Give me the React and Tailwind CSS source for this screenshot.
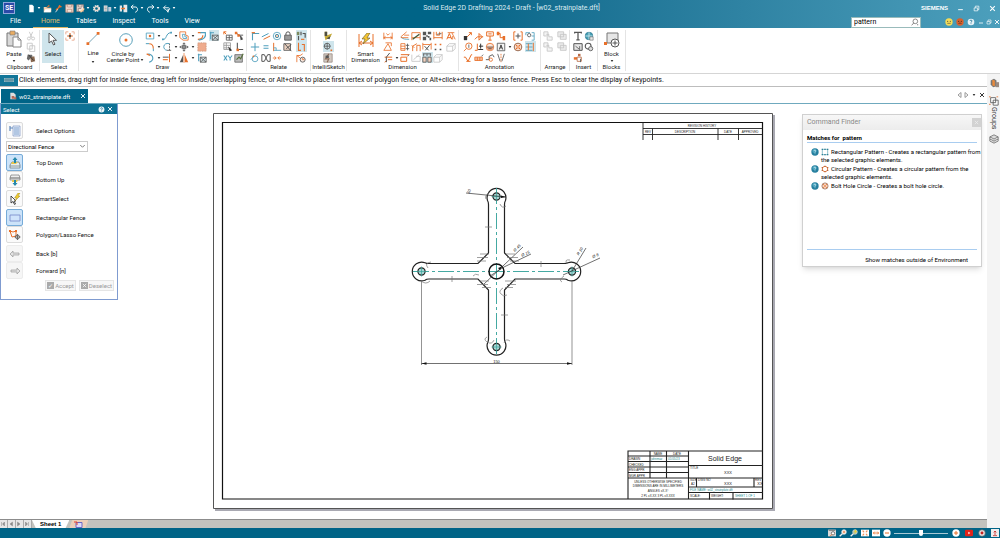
import { useState } from 'react';

// ===============================
// ICONS (12 x 12 grid)
// ===============================

const o = '#e8702a';
const g = '#555555';
const b = '#4f9fbd';
const l = '#c4c4c4';

const icons = {
  // quick access
  newDoc: <path d="M3 1h4l2 2v8H3z" fill="#fff" />,
  open: <><path d="M1 4h4l1 1h5v6H1z" fill="#f3cfae" /><path d="M4 5l4-4 1 2z" fill={o} /><path d="M3 7h8l-1 4H1z" fill="#fff" /></>,
  pin: <><path d="M7 1l4 3-4 1-3 4-2-2 3-2z" fill={o} /><path d="M2 11l3-4" stroke="#fff" /></>,
  save: <><path d="M1 1h10v10H1z" fill="#f7e6dc" /><path d="M3 1v3h6V1M3 11V7h6v4M1 1h10v10H1z" fill="none" stroke="#b98a78" /></>,
  saveAs: <><path d="M1 1h9v9H1z" fill="#f7e6dc" /><path d="M3 1v3h5V1M3 10V6h4M1 1h9v9H1z" fill="none" stroke="#8b7a78" /><path d="M6 11l5-5" stroke="#ffd19a" strokeWidth="2" /></>,
  gear: <><circle cx="6" cy="6" r="3.500" fill="none" stroke="#e8e8e8" strokeWidth="2.500" strokeDasharray="2 0.8" /><circle cx="6" cy="6" r="2.600" fill="none" stroke="#f0dcd0" strokeWidth="1.600" /></>,
  props: <><path d="M1 2h5v8H1z" fill="#e2e2e2" /><path d="M2 4h3M2 6h3M2 8h3" stroke="#777" strokeWidth=".7" /><path d="M7 4h4v6H7z" fill="#bcd" /></>,
  door: <><path d="M1 2h3v8H1zM6 1h5v10H6z" fill="#e8e8e8" /><path d="M3 6h5" stroke={o} strokeWidth="2" /></>,
  undo: <path d="M4.500 1L1.500 4l3 3M2 4h5c4 0 4 6 0 7" fill="none" stroke="#fff" strokeWidth="1.300" />,
  redo: <path d="M7.500 1l3 3-3 3M10 4H5c-4 0-4 6 0 7" fill="none" stroke="#fff" strokeWidth="1.300" />,
  orbit: <path d="M5 2L2 5l3 3M2 5h6c3 0 3 3 0 3H6m0 0l2 3 1-4" fill="none" stroke="#fff" strokeWidth="1.200" />,

  // clipboard
  cut: <><path d="M4 1l3 7M8 1L5 8" stroke={l} /><circle cx="3.500" cy="9" r="1.800" fill="none" stroke={l} /><circle cx="8.500" cy="9" r="1.800" fill="none" stroke={l} /></>,
  copy: <path d="M1.500 1.500h6v7h-6zM4.500 4.500h6v7h-6z" fill="#fff" stroke={l} />,
  brush: <><path d="M2 2h5l1 2-5 5-2-2z" fill="#6b6b6b" /><path d="M5 5l5-1 1 6-5 1z" fill="#8a6a52" /><path d="M3 2l6 7" stroke="#333" /></>,
  fence: <><path d="M1 4V1h3M8 1h3v3M11 8v3H8M4 11H1V8" fill="none" stroke="#e6a184" /><path d="M6 2.500v7M2.500 6h7" stroke={o} strokeWidth="1.400" /><circle cx="6" cy="6" r="1.500" fill={g} /></>,

  // draw
  rect: <><path d="M1.500 2.500h9v7h-9z" fill="none" stroke={b} /><circle cx="6" cy="6" r="1.500" fill={o} /></>,
  curve: <><path d="M1 10c5 1 3-8 10-8" fill="none" stroke={b} strokeWidth="1.200" /><path d="M0 9h2v2H0zM10 1h2v2h-2z" fill={b} /></>,
  offset: <><path d="M1 1h7v4l3 1v5H5L1 8z" fill="none" stroke={o} /><path d="M4 4h3v3h2v2H5z" fill="none" stroke={b} /></>,
  fillet: <><path d="M5 2c4 0 5 2 5 6" fill="none" stroke={o} strokeWidth="1.300" /><path d="M1 2h4M10 8v3" stroke={b} strokeWidth="1.200" /></>,
  arc: <><path d="M9 2C1 0 0 9 6 10" fill="none" stroke={b} strokeWidth="1.200" /><path d="M9 2v8" stroke={g} strokeDasharray="2 1" /><path d="M6 10h5" stroke={g} /></>,
  move: <path d="M6 1v10M1 6h10M4.500 2.500L6 1l1.500 1.500M4.500 9.500L6 11l1.500-1.500M2.500 4.500L1 6l1.500 1.500M9.500 4.500L11 6 9.500 7.500M4 4h4v4H4z" fill="none" stroke={g} />,
  hook: <><path d="M4 1c7 2 7 8 1 10" fill="none" stroke={b} strokeWidth="1.300" /><path d="M2 1l4 2" stroke={o} strokeWidth="1.500" /></>,
  trim: <><path d="M1 8h6" stroke={o} strokeWidth="1.300" /><path d="M9 1v10" stroke={o} strokeWidth="1.200" /><path d="M1 5h7" stroke={g} strokeWidth="1.200" /></>,
  mirror: <><path d="M5 2v9H1z" fill={g} /><path d="M7 2v9h4z" fill={o} /><path d="M6 0v12" stroke={o} strokeWidth=".8" /></>,
  path3: <><path d="M1 2h4M1 10c5 0 6-2 6-5" fill="none" stroke={o} strokeWidth="1.400" /><path d="M4 2h6c1 5-1 8-8 9" fill="none" stroke={b} strokeWidth="1.400" /></>,
  fill: <path d="M1 1h10v10H1z" fill="#efac8e" stroke="#c28b70" strokeDasharray="1 1" />,
  corner: <><path d="M1 2h5M2 1v9" stroke={b} strokeWidth="1.300" /><path d="M4 5h7v6H4z" fill="#dcebef" stroke={g} /><path d="M4 5l7 6M11 5l-7 6" stroke={g} /></>,
  gridNode: <><path d="M4 5h7v6H4zM7.500 5v6M4 8h7" fill="none" stroke={g} /><path d="M1 1l3 3M1 1v3M1 1h3" stroke={o} strokeWidth="1.200" /></>,
  gridCur: <><path d="M1 1h8v8H1zM4 1v8M1 4h8M1 7h8" fill="none" stroke="#999" /><path d="M6 5l5 5-3 1z" fill="#333" /></>,
  nodes: <><path d="M2 2l8 6M6 5l5 0" fill="none" stroke={g} strokeWidth="1.100" /><path d="M1 1h3v3H1zM4 4h3v3H4z" fill={o} /><path d="M7 5l4 5-3 1z" fill="#444" /></>,
  axis: <><path d="M4 1v8h7" fill="none" stroke={g} strokeWidth="1.300" /><path d="M3 8h3v3H3z" fill={o} /></>,
  xy: <><path d="M1 3l4 6M5 3L1 9" stroke={b} strokeWidth="1.300" /><path d="M6 3l2.500 3L11 3M8.500 6v3" fill="none" stroke={b} strokeWidth="1.300" /></>,
  sheetCheck: <><path d="M1 2h9v9H1z" fill="#bdbdbd" stroke="#666" /><path d="M3 8l3-3 2 2 3-6" fill="none" stroke="#56703a" strokeWidth="1.400" /></>,

  // relate
  connect: <><path d="M3 11V3h8" fill="none" stroke={b} strokeWidth="1.300" /><path d="M2 2h4" stroke={o} strokeWidth="1.400" /></>,
  parallel: <><path d="M1 7l8-4" stroke={b} strokeWidth="1.200" /><path d="M3 10l8-4" stroke={o} strokeWidth="1.200" /></>,
  concentric: <><circle cx="6" cy="6" r="4.500" fill="none" stroke={b} /><circle cx="6" cy="6" r="2" fill="none" stroke="#2f7d98" /><circle cx="6" cy="6" r=".8" fill={o} /></>,
  lock: <><path d="M3.500 5V3.500a2.500 2.500 0 015 0V5" fill="none" stroke={g} strokeWidth="1.200" /><path d="M2 5h8v6H2z" fill="#999" stroke={g} /></>,
  plus: <path d="M6 1v10M1 6h10" stroke={b} strokeWidth="1.200" />,
  equal: <path d="M3 4.500h6M3 7.500h6" stroke={b} strokeWidth="1.400" />,
  perp: <><path d="M2 1v10" stroke={o} strokeWidth="1.200" /><path d="M2 10h9M5 10V7H2" fill="none" stroke={b} /></>,
  rigid: <><path d="M1 2h8v8H1z" fill="#ead0bf" stroke={g} /><path d="M2 2l8 9M4 8l6-5" stroke={g} strokeWidth="1.200" /></>,
  tangent: <><circle cx="6" cy="7" r="3.500" fill="none" stroke={b} /><path d="M1 8l7-7" stroke={b} /><circle cx="4" cy="4" r="1" fill={o} /></>,
  symmetric: <path d="M1 2h3l2 4-2 4H1M11 2H8L6 6l2 4h3M1 2v8M11 2v8" fill="none" stroke={g} strokeWidth="1.200" />,
  collinear: <path d="M1 6h4M7 6h4M3 4l2 2-2 2M9 4L7 6l2 2" fill="none" stroke={o} />,
  handles: <><path d="M1 1h3v4H1z" fill="#7c8a60" /><path d="M6 1v4M3 6v5M8 3h3v5" fill="none" stroke={g} strokeWidth="1.400" /><path d="M6 10h4" stroke={o} strokeWidth="1.400" /></>,
  keep: <path d="M3 1v9h3M7 3h3v8" fill="none" stroke={o} strokeWidth="1.300" />,
  clock: <><path d="M1 11V3h4M5 3l3-2M1 3l4 3" fill="none" stroke={o} /><circle cx="8" cy="8" r="3" fill="#f6e8e0" stroke={g} /><path d="M8 6v2h2" fill="none" stroke={o} /></>,
  sketch: <><path d="M2 1h3v4l6-2-2 4-6 4-1-4z" fill="#c6ab3a" /><path d="M2 1h3v5H2zM4 9l5-3-1 4z" fill="#4e4e44" /></>,
  target: <><circle cx="5" cy="5" r="3.500" fill="none" stroke={g} /><path d="M5 1v8M1 5h8" stroke={g} /><path d="M9 9h2v2H9z" fill={o} /></>,
  sketchBox: <><path d="M1 1h10v10H1z" fill="#d2c9c2" stroke="#9a8f88" /><path d="M7 1L3 7h4l-2 4" fill="none" stroke="#8a6a55" strokeWidth="1.400" /><path d="M3 3h4v3H3z" fill={g} /></>,

  // dimension
  dimH: <path d="M1 2v8M11 2v8M1 8h10M3 6.500L1 8l2 1.500M9 6.500L11 8 9 9.500M4 3l2 2 2-2" fill="none" stroke={o} />,
  dimAngle: <><path d="M1 10L6 2l4 8z" fill="none" stroke={o} /><path d="M3 1h7M10 1v4" fill="none" stroke={o} /></>,
  dimSym: <><path d="M2 5h9M6 8h5M2 11l3-2" fill="none" stroke={o} strokeWidth="1.200" /><path d="M8 0L4 5v6" fill="none" stroke={g} strokeWidth="1.200" /></>,
  dimDist: <><path d="M8 1L1 7M5 5h6" fill="none" stroke={o} /><path d="M1 7c2 3 6 3 10 3" fill="none" stroke={b} /><path d="M1 8h9" stroke={o} /></>,
  dimChart: <><path d="M1 2h10M1 2v9M11 2v9M1 8h10" stroke={o} /><path d="M2 10l8-6" fill="none" stroke="#3f5a38" strokeWidth="1.600" /></>,
  dimQr: <path d="M1 1h4v4H1zM7 1h4v3H7zM1 7h4v4H1zM7 6h2v2H7zM9 8h2v3H9zM5 5h2v2H5z" fill={g} />,
  dimBase: <><path d="M1 1v9M11 1v9M1 8h10M4 1v4h4V1" fill="none" stroke={o} strokeWidth="1.100" /><path d="M5 4l5-1" stroke={g} /></>,
  dimBox: <><path d="M1 2h5v8H1zM1 5h5M1 8h5" fill="none" stroke={o} /><path d="M7 4h4M7 8h4M9 2v8" fill="none" stroke={g} /></>,
  dimSplit: <path d="M2 11V5l5-3M7 11V4h4v7M1 4l3 3" fill="none" stroke={o} strokeWidth="1.100" />,
  dimFix: <><path d="M1 3h10M1 1v8M11 1v8" stroke={o} /><path d="M3 5l5 5M9 4l-5 6" stroke={g} strokeWidth="1.200" /></>,
  dots: <><path d="M2 2h2v2H2zM8 2h2v2H8z" fill={o} /><path d="M2 8h2v2H2zM8 8h2v2H8z" fill={g} /></>,
  dimRow: <><path d="M1 2h10M1 5h7v5H1z" fill="none" stroke={o} strokeWidth="1.200" /><path d="M9 4l2-2" stroke={g} /></>,
  dimOff: <path d="M1 2v8h10M3 8l7-6M6 4h5v6" fill="none" stroke={l} />,
  dimKeep: <path d="M1 1h10M2 1v3M6 1v3M10 1v3M1 5h4v6H1zM7 5h4v6H7z" fill="#f2d2bf" stroke={g} />,
  boxOff: <path d="M1 5h7v6H1zM1 5l3-3h7l-3 3M8 11l3-3V2" fill="none" stroke={l} />,
  textA: <><path d="M1 10l3-7 3 7M2 8h4" fill="none" stroke={o} strokeWidth="1.200" /><path d="M2 2h8M7 2l4 8M8 6v4" fill="none" stroke={o} /></>,

  // annotation
  leader: <><path d="M5 7l5-5M10 2H7M10 2v3" fill="none" stroke={o} strokeWidth="1.200" /><path d="M1 6h4v5H1z" fill="#333" /></>,
  weld: <path d="M1 10l3-3h7M6 3v8l4-4z" fill="none" stroke={o} strokeWidth="1.200" />,
  flag: <path d="M2 1h8v5H2zM6 6v5M4 3.500h4M4 11h4" fill="none" stroke={o} strokeWidth="1.200" />,
  step: <><path d="M1 3h4v5h4" fill="none" stroke={o} strokeWidth="1.200" /><path d="M1 1h3v4H1zM8 6h3v5H8z" fill={o} /></>,
  bracket: <><path d="M3 1H1v10h2M9 1h2v10H9" fill="none" stroke={o} strokeWidth="1.200" /><path d="M6 3v6M3 6h6" stroke={g} strokeWidth="1.200" /></>,
  hole: <><path d="M1 2h5M1 2v3" fill="none" stroke={b} /><circle cx="5" cy="5" r="2" fill="none" stroke={g} /><path d="M8 2h3v9H8M8 6h3" fill="none" stroke={b} /></>,
  balloon: <><circle cx="7" cy="5" r="3.800" fill="none" stroke={o} strokeWidth="1.100" /><path d="M4 8l-3 3" stroke={o} /><path d="M7 3v4" stroke={g} /></>,
  surface: <><path d="M1 10h3V2" fill="none" stroke={o} strokeWidth="1.200" /><path d="M5 9h6M8 2v6M6 5h5" stroke="#333" strokeWidth="1.200" /></>,
  ball: <><circle cx="6" cy="6" r="4.500" fill="#fbe6da" stroke={o} /><path d="M1.500 6a4.500 4.500 0 009 0z" fill="#f0a47c" /><path d="M2 6h8M4 8h4" stroke={g} /></>,
  boxA: <><path d="M1.500 1.500h9v9h-9z" fill="#f4f4f4" stroke={g} /><path d="M4 9l2-5.500L8 9M5 7h2" fill="none" stroke="#222" /></>,
  bolt: <><circle cx="6" cy="6" r="4.600" fill="#fbe2d3" stroke="#9a6a50" strokeWidth="1.200" /><path d="M3 3l6 6M9 3L3 9" stroke={o} strokeWidth="1.200" /><circle cx="6" cy="6" r="1.400" fill="#fff" stroke={o} /></>,
  center: <><path d="M1 2h8M1 6h8M1 10h8" stroke={b} /><path d="M10 1v10M4 2v8" stroke={o} strokeWidth="1.100" /></>,
  rough: <path d="M1 5h2l3 5 4-8h1M4 10h5" fill="none" stroke={o} strokeWidth="1.200" />,
  frame: <><path d="M1 5h9v4H1zM4 5v4M7 5v4" fill="#f7c3a3" stroke={o} /><path d="M9 4l2-2" stroke={g} /></>,
  edge: <><path d="M1 8h4V4l4-2M9 2l2 3" fill="none" stroke={g} strokeWidth="1.100" /><circle cx="7" cy="8" r="2" fill="none" stroke={o} /></>,
  vee: <><path d="M2 1l3 9M10 1L7 10" stroke={g} /><path d="M6 1v10" stroke={o} strokeDasharray="2 1" /></>,

  // arrange and insert
  group: <path d="M1 1h5v5H1zM4 4h3v3h4v4H5V7" fill="#f4f4f4" stroke={l} />,
  stack: <path d="M1 1h7v6H1zM4 4h7v6H4z" fill="#ececec" stroke={l} />,
  textT: <path d="M2 3V1.500h8V3M6 1.500v9M4 10.500h4" fill="none" stroke={g} strokeWidth="1.500" />,
  globe: <><circle cx="6" cy="6" r="4.500" fill="#4aa3b8" stroke="#2b7890" /><path d="M6 1.500v9M1.500 6h9" stroke="#cfe9ef" /><path d="M7 7h4v4H7z" fill="#e9e9e9" stroke={g} strokeWidth=".6" /></>,
  image: <><path d="M1 2h10v8H1z" fill="#e6e6e6" stroke={g} strokeWidth="1.200" /><path d="M3 5l5 4M8 5v4" stroke={g} /></>,
  chain: <><circle cx="5" cy="5" r="3.500" fill="none" stroke={g} strokeWidth="1.300" /><circle cx="8" cy="8" r="2.500" fill="#ddd" stroke={g} /></>,
  object: <><path d="M1 5h4v3H1z" fill={o} /><path d="M6 1h3v3H6z" fill="#b86a45" /><path d="M5 5h5v5H5z" fill="#fff" stroke="#b86a45" /><path d="M9 7v4" stroke={g} /></>,

  // command finder results
  rectPattern: <><path d="M2 2h8v8H2z" fill="none" stroke="#58a3b4" /><path d="M1 1h2v2H1zM5 1h2v2H5zM9 1h2v2H9zM1 9h2v2H1zM5 9h2v2H5zM9 9h2v2H9z" fill="#2f7f95" /></>,
  circPattern: <><circle cx="6" cy="6" r="4" fill="none" stroke={o} strokeWidth="1.200" /><path d="M5 1h2v2H5zM5 9h2v2H5zM1 3h2v2H1zM9 3h2v2H9zM1 7h2v2H1zM9 7h2v2H9z" fill="#b9653d" /></>,

  // select panel
  options: <><path d="M4 1h7v10H4z" fill="#e9f1fb" stroke="#7f97c4" strokeWidth=".7" /><path d="M5 3h5M5 5h5M5 7h5M5 9h5" stroke="#4e78b8" strokeWidth=".7" /><path d="M1 1v5M1 3h3" stroke="#5e87bb" strokeWidth="1.200" /></>,
  topDown: <><path d="M1 8l2-3h7l1 3v3H1z" fill="#e8eef0" stroke="#66767e" strokeWidth=".7" /><path d="M1 9h10" stroke="#66767e" strokeWidth=".7" /><path d="M3 5h6L7 7H2z" fill="#e7c64c" /><path d="M6 0L3.500 3H5v3h2V3h1.500z" fill="#2588aa" /></>,
  bottomUp: <><path d="M2 1h8l1 3H1zM1 4h10v2H1z" fill="#eee" stroke="#777" strokeWidth=".7" /><path d="M3 6h6L8 8H3z" fill="#e7c64c" /><path d="M6 12L3.500 9H5V6h2v3h1.500z" fill="#2588aa" /></>,
  smart: <><path d="M2 3v7l2-1.500 1.500 3 1-.5L5 8h2z" fill="#fff" stroke="#222" strokeWidth=".8" /><path d="M9 0L5.500 5h2L6 8l5-5H9l2-3z" fill="#f2cd2e" stroke="#8b7722" strokeWidth=".4" /></>,
  rectFence: <path d="M1 3h10v6H1z" fill="#cfe3fb" stroke="#7387c9" strokeWidth=".8" />,
  lasso: <><path d="M1 2l3 1 3-1v5L3 8 2 5z" fill="none" stroke={o} /><path d="M0 1h2v2H0zM6 1h2v2H6z" fill={o} /><circle cx="8.500" cy="8" r="2" fill="none" stroke={g} strokeWidth=".8" /><path d="M8.500 5v6M5.500 8h6" stroke={g} strokeWidth=".8" /></>,
  back: <path d="M1 6l3-3v2h6v2H4v2z" fill="#e2e2e2" stroke="#999" strokeWidth=".7" />,
  forward: <path d="M11 6L8 3v2H2v2h6v2z" fill="#e2e2e2" stroke="#999" strokeWidth=".7" />,

  // status bar
  zoomArea: <><path d="M0 1h12v10H0z" fill="#d9d9d9" /><path d="M1 2h10" stroke="#8a8a8a" strokeWidth="2" /><circle cx="7.500" cy="6.500" r="2.500" fill="#fff" stroke="#444" /><path d="M6 8l-3 3" stroke={o} strokeWidth="1.500" /></>,
  zoom: <><circle cx="7.500" cy="4.500" r="3.500" fill="#f7e4d8" stroke="#eee" /><path d="M5 7l-4 4" stroke="#eee" strokeWidth="2" /><path d="M7.500 3v3M6 4.500h3" stroke={o} /></>,
  zoomBolt: <><circle cx="7.500" cy="4.500" r="3.500" fill="#b6c39a" stroke="#ddd" /><path d="M5 7l-4 4" stroke="#eee" strokeWidth="2" /><path d="M9 0L6 4h2L6 8l5-5H9z" fill="#e8d33a" /></>,
  fit: <><path d="M0 1h12v10H0z" fill="#fff" /><path d="M2 3h2v2M10 3H8v2M2 9h2V7M10 9H8V7" fill="none" stroke={o} strokeWidth="1.200" /></>,
  pan: <><path d="M0 1h12v10H0z" fill="#fff" /><path d="M2 6h8M4 4L2 6l2 2M8 4l2 2-2 2" fill="none" stroke={o} strokeWidth="1.200" /></>,
  zoomOut: <><circle cx="6" cy="6" r="5.500" fill="#fff" /><path d="M3 6h6" stroke={o} strokeWidth="1.500" /></>,
  zoomIn: <><circle cx="6" cy="6" r="5.500" fill="#fff" /><path d="M3 6h6M6 3v6" stroke={o} strokeWidth="1.500" /></>,
  video: <><rect x="0" y="1" width="12" height="10" rx="2" fill="#e2231a" /><path d="M5 4v4l3-2z" fill="#fff" /></>,
  record: <><circle cx="6" cy="6" r="5" fill="#e5e5e5" stroke="#555" /><circle cx="6" cy="6" r="2.200" fill="#c5221f" /></>,
  upload: <><path d="M0 0h12v12H0z" fill="#eee" /><path d="M6 9V3M4 5l2-2 2 2M3 10h6" fill="none" stroke="#c5221f" strokeWidth="1.200" /></>,

  // side rail
  library: <><path d="M2 3l4-2 3 2v7l-4 1-3-3z" fill="#777" /><path d="M4 2l3 1v7l-3-1z" fill="#e98a3b" /><path d="M8 5h4v6H8z" fill="#9a8a80" /></>,
  groups: <><path d="M2 2h6v6H2zM5 5h6v6H5z" fill="#fff" stroke={g} /><path d="M0 1h2M0 10h2M9 1h2" stroke={o} /></>,
  layers: <path d="M6 1l5 2.500L6 6 1 3.500zM1 6l5 2.500L11 6M1 8.500L6 11l5-2.500M1 3.500v5M11 3.500v5" fill="#ddd" stroke={g} strokeWidth=".8" />,
  search: <><circle cx="6.500" cy="5" r="3.500" fill="none" stroke={g} /><path d="M4 7.500L1 11M10 9v2" stroke={g} /></>,
  help: <><circle cx="6" cy="6" r="5" fill="#e9f3f7" /><path d="M4.500 4.500c0-2 3-2 3 0 0 1.200-1.500 1-1.500 2.500M6 8v1.200" fill="none" stroke="#176d92" strokeWidth="1.200" /></>,
  helpBlue: <><circle cx="6" cy="6" r="5.500" fill="#257f9f" /><circle cx="5" cy="4.500" r="3" fill="#4ea6c0" /><path d="M4.500 4.500c0-2 3-2 3 0 0 1.200-1.500 1-1.500 2.500M6 8v1.200" fill="none" stroke="#d8f2f8" /></>,
  smile: <><circle cx="6" cy="6" r="5.500" fill="#f4dc58" /><circle cx="4" cy="5" r=".9" fill="#554" /><circle cx="8" cy="5" r=".9" fill="#554" /><path d="M3.500 8h5" stroke="#554" /></>,
  frown: <><circle cx="6" cy="6" r="5.500" fill="#d9602c" /><circle cx="4" cy="5" r=".9" fill="#432" /><circle cx="8" cy="5" r=".9" fill="#432" /><path d="M3.500 9c1-2 4-2 5 0" fill="none" stroke="#432" /></>,
  minimize: <path d="M2 8h8" stroke="currentColor" strokeWidth="1.600" />,
  restore: <path d="M2 5h6v5H2zM4 5V2h6v6H8" fill="none" stroke="currentColor" strokeWidth="1.200" />,
  close: <path d="M2 2l8 8M10 2l-8 8" stroke="currentColor" strokeWidth="1.800" />,
};

const Icon = ({ name, className = 'size-[10px]' }) => (
  <svg viewBox="0 0 12 12" className={`shrink-0 ${className}`} aria-hidden="true">{icons[name]}</svg>
);

const Caret = ({ className = 'text-[#333]' }) => (
  <svg viewBox="0 0 4 3" className={`h-[2px] w-[4px] shrink-0 ${className}`} aria-hidden="true">
    <path d="M0 0h4L2 3z" fill="currentColor" />
  </svg>
);

// ===============================
// TOP BAR
// ===============================

const quickAccess = [
  ['newDoc', true], ['open'], ['pin'], ['save'], ['saveAs', true], ['gear'],
  ['props', true], ['door'], ['undo', true], ['redo', true], ['orbit', true],
];

const tabs = ['File', 'Home', 'Tables', 'Inspect', 'Tools', 'View'];

const TopBar = () => {
  const [tab, setTab] = useState('Home');
  const [query, setQuery] = useState('pattern');

  return (
    <header className="bg-linear-to-r from-[#006487] from-45% to-[#4c9fbc] text-white">
      <div className="flex h-4 items-center pr-1 pl-[3px]">
        <div className="flex size-3 items-center justify-center border border-[#8fa6dc] bg-[#2b4aa8] text-[7px] font-bold">SE</div>
        <div className="ml-3 flex flex-1 items-center gap-[2px]">
          {quickAccess.map(([name, more]) => (
            <button key={name} aria-label={name} className="flex items-center gap-[1px]">
              <Icon name={name} className="size-[9px]" />
              {more && <Caret className="text-white" />}
            </button>
          ))}
        </div>
        <h1 className="text-[7px] text-[#dcebf1]">Solid Edge 2D Drafting 2024 - Draft - [w02_strainplate.dft]</h1>
        <div className="flex flex-1 items-center justify-end gap-[9px]">
          <span className="font-['Liberation_Sans',sans-serif] text-[6px] font-black">SIEMENS</span>
          <button aria-label="Minimize"><Icon name="minimize" className="size-[7px]" /></button>
          <button aria-label="Restore"><Icon name="restore" className="size-[7px]" /></button>
          <button aria-label="Close"><Icon name="close" className="size-[7px]" /></button>
        </div>
      </div>
      <div className="flex h-3 items-center">
        <nav className="flex h-full flex-1 pl-[2px]">
          {tabs.map((t) => (
            <button
              key={t}
              onClick={() => setTab(t)}
              className={`h-full border-b px-2 text-[7px] leading-[11px] first:mr-1 ${t === tab ? 'border-[#dfb765] text-[#e3bd6a]' : 'border-transparent'}`}
            >
              {t}
            </button>
          ))}
        </nav>
        <div className="mr-6 flex h-[11px] w-[70px] items-center border border-[#9bb] bg-white pr-[1px]">
          <input
            aria-label="Command search"
            value={query}
            onChange={(e) => setQuery(e.target.value)}
            className="w-0 flex-1 px-[2px] text-[7px] leading-[9px] text-black outline-none"
          />
          <Icon name="search" className="size-2" />
        </div>
        <div className="flex items-center gap-[3px]">
          <button aria-label="Like"><Icon name="smile" className="size-2" /></button>
          <button aria-label="Dislike"><Icon name="frown" className="size-2" /></button>
          <button aria-label="Help"><Icon name="help" className="size-2" /></button>
          <div className="flex items-center gap-[2px]">
            <button aria-label="Minimize document"><Icon name="minimize" className="size-[6px]" /></button>
            <button aria-label="Restore document"><Icon name="restore" className="size-[6px]" /></button>
            <button aria-label="Close document"><Icon name="close" className="size-[6px]" /></button>
          </div>
        </div>
      </div>
    </header>
  );
};

// ===============================
// RIBBON
// ===============================

const Group = ({ label, className, children }) => (
  <section className={`flex shrink-0 flex-col border-r border-[#e4e4e4] ${className}`}>
    <div className="flex h-[33px] justify-center">{children}</div>
    <div className="text-center leading-[8px] whitespace-nowrap">{label}</div>
  </section>
);

// a column of up to three small tools: [icon, dropdown, highlighted]
const Column = ({ items, className = 'w-[11px]' }) => (
  <div className={`flex shrink-0 flex-col ${className}`}>
    {items.map(([name, more, on], i) => (
      <button
        key={i}
        aria-label={name}
        className={`flex h-[11px] items-center gap-[2px] ${on ? 'bg-[#cfe5ec]' : ''}`}
      >
        <Icon name={name} />
        {more && <Caret />}
      </button>
    ))}
  </div>
);

const Ribbon = () => (
  <div className="flex border-b border-[#d5d5d5] bg-white pt-[2px] pb-[2px] text-[6px] text-[#222]">
    <Group label="Clipboard" className="w-10">
      <button className="flex w-6 flex-col items-center">
        <svg viewBox="0 0 16 18" className="h-[18px] w-4">
          <path d="M1 3h11v13H1z" fill="#d9d9d9" stroke="#777" />
          <path d="M4 1h5v4H4z" fill="#e9ac62" stroke="#777" strokeWidth=".6" />
          <path d="M7 7h5l3 3v7H7z" fill="#fff" stroke="#888" />
          <path d="M12 7v3h3" fill="none" stroke="#888" />
        </svg>
        <span className="leading-[12px]">Paste</span>
        <Caret />
      </button>
      <Column items={[['cut'], ['copy'], ['brush']]} />
    </Group>

    <Group label="Select" className="w-[39px]">
      <button className="flex w-[22px] flex-col items-center bg-[#cfe5ec] pt-[2px]">
        <svg viewBox="0 0 10 14" className="h-[14px] w-[10px]">
          <path d="M1 1v10l2.500-2 2 4 1.500-.8-2-3.900H8.500z" fill="#fff" stroke="#555" />
        </svg>
        <span className="leading-[16px]">Select</span>
      </button>
      <Column items={[['fence']]} className="ml-[1px] w-[11px]" />
    </Group>

    <Group label="Draw" className="w-[168px]">
      <button className="flex w-[26px] flex-col items-center pt-[2px]">
        <svg viewBox="0 0 14 14" className="h-[14px] w-[14px]">
          <path d="M1.500 12.500l11-11" stroke="#6f9fb2" />
          <path d="M0 11h3v3H0zM11 0h3v3h-3z" fill="#e8702a" />
        </svg>
        <span className="leading-[16px]">Line</span>
        <Caret />
      </button>
      <button className="flex w-[39px] flex-col items-center pt-[3px]">
        <svg viewBox="0 0 14 14" className="h-[14px] w-[14px]">
          <circle cx="7" cy="7" r="6.300" fill="none" stroke="#5aa0ba" />
          <circle cx="7" cy="7" r="1.500" fill="#e8702a" />
        </svg>
        <span className="flex items-end gap-[1px] pt-[4px] leading-[6px] whitespace-nowrap">
          <span>Circle by<br />Center Point</span>
          <Caret className="mb-[2px] text-[#333]" />
        </span>
      </button>
      <Column className="w-[17px]" items={[['rect', true], ['fillet', true], ['hook', true]]} />
      <Column className="w-[17px]" items={[['curve', true], ['arc', true], ['trim', true]]} />
      <Column className="w-[18px]" items={[['offset', true], ['move', true], ['mirror', true]]} />
      <Column className="w-3" items={[['path3'], ['fill'], ['corner']]} />
      <Column className="mr-[4px]" items={[['corner', false, true]]} />
      <Column className="w-[11px]" items={[['gridNode'], ['gridCur'], ['xy']]} />
      <Column items={[['nodes'], ['axis'], ['sheetCheck']]} />
    </Group>

    <Group label="Relate" className="w-[64px]">
      <Column items={[['connect'], ['plus'], ['tangent']]} />
      <Column items={[['parallel'], ['equal'], ['symmetric']]} />
      <Column items={[['concentric'], ['perp'], ['collinear']]} />
      <Column className="mr-[3px]" items={[['lock'], ['rigid']]} />
      <Column items={[['handles', false, true], ['keep', false, true], ['clock']]} />
    </Group>

    <Group label="IntelliSketch" className="w-[36px]">
      <Column items={[['sketch'], ['target', false, true], ['sketchBox']]} />
    </Group>

    <Group label="Dimension" className="w-[112px]">
      <button className="flex w-[34px] flex-col items-center pt-[3px]">
        <svg viewBox="0 0 16 14" className="h-[14px] w-4">
          <path d="M1 1v13M15 1v13M1 10h14M4 8l-3 2 3 2M12 8l3 2-3 2" fill="none" stroke="#e8702a" />
          <path d="M9 0L4 6h3L5 11l7-6H9l3-5z" fill="#f4c532" stroke="#66592a" strokeWidth=".6" />
        </svg>
        <span className="pt-[4px] leading-[6px]">Smart<br />Dimension</span>
      </button>
      <Column className="w-[17px]" items={[['dimH'], ['dimAngle'], ['dimSym', true]]} />
      <Column items={[['dimDist'], ['dimBox'], ['dimRow']]} />
      <Column items={[['dimChart'], ['dimSplit'], ['dimOff']]} />
      <Column items={[['dimQr'], ['dimFix'], ['dimKeep', false, true]]} />
      <Column className="mr-[3px]" items={[['dimBase'], ['dots'], ['boxOff']]} />
      <Column items={[['textA'], ['boxOff']]} />
    </Group>

    <Group label="Annotation" className="w-[82px]">
      <Column items={[['leader'], ['balloon'], ['rough']]} />
      <Column items={[['weld'], ['surface'], ['frame']]} />
      <Column items={[['flag'], ['ball'], ['edge']]} />
      <Column className="w-[17px]" items={[['step'], ['boxA', true], ['vee']]} />
      <Column className="mr-[2px]" items={[['bracket'], ['bolt']]} />
      <Column items={[['hole'], ['center', false, true]]} />
    </Group>

    <Group label="Arrange" className="w-[29px]">
      <Column className="mr-[3px] w-[11px]" items={[['group'], ['group']]} />
      <Column items={[['stack'], ['stack']]} />
    </Group>

    <Group label="Insert" className="w-[28px]">
      <Column items={[['textT'], ['image'], ['object']]} />
      <Column items={[['globe'], ['chain']]} />
    </Group>

    <Group label="Blocks" className="w-[28px]">
      <button className="flex flex-col items-center pt-[2px]">
        <svg viewBox="0 0 16 16" className="size-4">
          <path d="M3 1h11v10H3z" fill="#e6e6e6" stroke="#777" />
          <circle cx="11" cy="11" r="4" fill="#fff" stroke="#555" />
          <path d="M11 8.500v5M8.500 11h5" stroke="#555" />
          <path d="M0 10h3v3H0z" fill="#e8702a" />
        </svg>
        <span className="leading-[12px]">Block</span>
        <Caret />
      </button>
    </Group>
  </div>
);

// ===============================
// SELECT PANEL
// ===============================

const selectTools = [
  { icon: 'topDown', label: 'Top Down', on: true, gap: '' },
  { icon: 'bottomUp', label: 'Bottom Up', gap: '' },
  { icon: 'smart', label: 'SmartSelect', gap: 'mt-[2px]' },
  { icon: 'rectFence', label: 'Rectangular Fence', on: true, gap: 'mt-[2px]' },
  { icon: 'lasso', label: 'Polygon/Lasso Fence', gap: '' },
  { icon: 'back', label: 'Back [b]', gap: 'mt-[2px]', off: true },
  { icon: 'forward', label: 'Forward [n]', gap: '', off: true },
];

const ToolRow = ({ icon, label, on, off, gap }) => (
  <button className={`flex h-[17px] items-center gap-[13px] text-left ${gap}`}>
    <span className={`flex size-[17px] items-center justify-center rounded-[2px] border ${on ? 'border-[#76abd8] bg-[#cce3f9]' : off ? 'border-[#ececec] bg-[#f6f6f6]' : 'border-[#dcdcdc] bg-[#fafafa]'}`}>
      <Icon name={icon} className="size-3" />
    </span>
    {label}
  </button>
);

const SelectPanel = () => (
  <aside className="w-[118px] shrink-0 self-start border border-t-0 border-[#7f9bd0] bg-white text-[6px] text-[#111]">
    <div className="flex h-[10px] items-center bg-[#0e7295] px-[2px] text-white">
      <span className="flex-1">Select</span>
      <button aria-label="Panel help"><Icon name="help" className="mr-[2px] size-[7px]" /></button>
      <button aria-label="Close panel"><Icon name="close" className="mr-[2px] size-[6px]" /></button>
    </div>
    <div className="flex flex-col pt-2 pb-2 pl-[5px]">
      <ToolRow icon="options" label="Select Options" gap="" />
      <div className="mt-[2px] mb-[2px] grid h-[11px] w-[82px] items-center border border-[#ccc] bg-white text-black">
        <select aria-label="Fence type" className="col-start-1 row-start-1 appearance-none pl-[1px] leading-[9px]">
          <option>Directional Fence</option>
        </select>
        <svg viewBox="0 0 6 4" className="pointer-events-none col-start-1 row-start-1 mr-[2px] h-[3px] w-[5px] justify-self-end">
          <path d="M0 0l3 3 3-3" fill="none" stroke="#555" />
        </svg>
      </div>
      {selectTools.map((t) => <ToolRow key={t.label} {...t} />)}
      <div className="mt-[1px] mr-[3px] flex justify-end gap-[3px] text-[#999]">
        <button className="flex h-[11px] items-center gap-[1px] border border-[#e5e5e5] bg-[#f7f7f7] px-[1px]">
          <span className="flex size-[7px] items-center justify-center bg-[#aaa] text-[6px] text-white">✓</span>Accept
        </button>
        <button className="flex h-[11px] items-center gap-[1px] border border-[#e5e5e5] bg-[#f7f7f7] px-[1px]">
          <span className="flex size-[7px] items-center justify-center bg-[#aaa] text-white"><Icon name="close" className="size-[5px]" /></span>Deselect
        </button>
      </div>
    </div>
  </aside>
);

// ===============================
// DRAWING SHEET
// ===============================

const Hole = ({ x, y }) => (
  <>
    <circle cx={x} cy={y} r="3.600" fill="#a8d6d4" stroke="#222" strokeWidth="1.200" />
    <path d={`M${x - 5} ${y}h10M${x} ${y - 5}v10`} stroke="#3ba59c" strokeWidth=".7" />
  </>
);

const Sheet = () => (
  <svg viewBox="213 113 562 398" className="w-full" fontFamily="Liberation Sans, sans-serif" fontSize="3" textAnchor="middle" fill="#222">
    <path d="M215 115h560v396H215z" fill="#a9a9b2" />
    <path d="M213.500 113.500h559v395h-559z" fill="#fff" stroke="#555" />
    <path d="M222.500 122.500h540v376.500h-540z" fill="none" stroke="#111" strokeWidth="1.200" />

    {/* revision table */}
    <path d="M643 122.500v17.500M643 128.500h119.500M643 134.500h119.500M652.500 128.500V140M718 128.500V140M738.500 128.500V140" fill="none" stroke="#222" strokeWidth=".9" />
    <text x="702" y="127">REVISION HISTORY</text>
    <text x="648" y="133">REV</text>
    <text x="685" y="133">DESCRIPTION</text>
    <text x="728" y="133">DATE</text>
    <text x="750" y="133">APPROVED</text>

    {/* part outline */}
    <path
      d="M488.500 253V204.500q0-2.500-1-4a9.400 9.400 0 1118 0q-1 1.500-1 4V253L515 263.500h49q2.500 0 4-.8a9.400 9.400 0 110 17.600q-1.500-1.300-4-1.300H515L504.500 290v49q0 2.500 1 4a9.400 9.400 0 11-18 0q1-1.500 1-4v-49L478 279h-49q-2.500 0-4 1.300a9.400 9.400 0 110-17.600q1.500.8 4 .8h49z"
      fill="#fff" stroke="#222" strokeWidth="1.200"
    />
    <path d="M413 271.500h167M496.500 188v167" stroke="#2f9f97" strokeWidth=".9" strokeDasharray="16 3 3 3" />
    <circle cx="496.500" cy="271.500" r="7.500" fill="none" stroke="#111" strokeWidth="1.500" />
    <Hole x={496.5} y={196.5} />
    <Hole x={421.5} y={271.5} />
    <Hole x={572} y={271.5} />
    <Hole x={496.5} y={347} />

    {/* dimensions */}
    <g fill="none" stroke="#333" strokeWidth=".7">
      <path d="M421.500 281v84M572 281v84" stroke="#666" />
      <path d="M421.500 363.500H572" />
      <path d="M466 193l40 4M484 284l39-37M490 276l14-9 27-13M563 275l37-17M572 271l14-23" />
    </g>
    <path d="M421.500 363.500l5-1.200v2.400zM572 363.500l-5-1.200v2.400zM506 197l-5-1.500v2.500zM502 266.500l-4 1.500 2 2z" fill="#111" />
    <text x="496.500" y="362.500" fontSize="4">150</text>
    <g fontSize="4" fontStyle="italic">
      <text transform="translate(470 192) rotate(-60)">10</text>
      <text transform="translate(518 249) rotate(-42)">Ø 45</text>
      <text transform="translate(526 255) rotate(-25)">Ø 15</text>
      <text transform="translate(581 252) rotate(-58)">R 10</text>
      <text transform="translate(596 257) rotate(-25)">Ø 8</text>
    </g>

    {/* relationship handles */}
    <g fill="none" stroke="#777" strokeWidth=".7">
      <path d="M485 227h7M541 261v6M452 276v6M501 315h7" />
      <path d="M480 254h9M477 257.500h11M477 261h9M506 254h9M507 257.500h11M510 261h9M480 281h9M477 284.500h11M482 287.500h9M505 281h11M507 284.500h9M505 287.500h8" />
      <path d="M500 204q2 5 6 2M428 268q-4-5 3-6M567 264q-3-5 3-4M564 276q-6 4-2 6M503 288q-5 3-2 6 2 3 6 1M487 337q-4 2 0 5 5 3 7-2M504 343q2-5 6-2M490 192q-6 4-4 7M421 281q5 4 9 0M473 276q2-3 6-1" />
    </g>

    {/* title block */}
    <path
      d="M628 499v-48h135M688.500 451v48M628 456h60M628 461.500h60M628 467h60M628 472.500h60M628 478h135M650 451v27M666.500 451v27M688 465.500h75M688 487h75M688 492.500h75M696.500 478v9M754 478v9M709.500 492.500v7M733 492.500v7"
      fill="none" stroke="#222" strokeWidth="1.100"
    />
    <text x="725" y="461" fontSize="7">Solid Edge</text>
    <text x="658" y="455">NAME</text>
    <text x="677" y="455">DATE</text>
    <g textAnchor="start">
      <text x="629" y="460">DRAWN</text>
      <text x="629" y="466">CHECKED</text>
      <text x="629" y="471">ENG APPR</text>
      <text x="629" y="477">MGR APPR</text>
      <text x="690" y="469">TITLE</text>
      <text x="690" y="481">SIZE</text>
      <text x="691" y="485">A2</text>
      <text x="698" y="481">DWG NO</text>
      <text x="755" y="481">REV</text>
      <text x="690" y="497">SCALE:</text>
      <text x="711" y="497">WEIGHT:</text>
      <g fill="#268c90">
        <text x="651" y="460">johnmaz</text>
        <text x="668" y="460">01/05/23</text>
        <text x="690" y="491">FILE NAME: w02_strainplate.dft</text>
        <text x="735" y="497">SHEET 1 OF 1</text>
      </g>
    </g>
    <g fontSize="4">
      <text x="728" y="474">XXX</text>
      <text x="728" y="485">XXX</text>
      <text x="760" y="485">XX</text>
    </g>
    <text x="658" y="483">UNLESS OTHERWISE SPECIFIED</text>
    <text x="658" y="487">DIMENSIONS ARE IN MILLIMETERS</text>
    <text x="658" y="492">ANGLES ±X.X°</text>
    <text x="658" y="497">2 PL ±X.XX 3 PL ±X.XXX</text>
  </svg>
);

// ===============================
// COMMAND FINDER
// ===============================

const matches = [
  { icon: 'rectPattern', text: 'Rectangular Pattern - Creates a rectangular pattern from the selected graphic elements.' },
  { icon: 'circPattern', text: 'Circular Pattern - Creates a circular pattern from the selected graphic elements.' },
  { icon: 'bolt', text: 'Bolt Hole Circle - Creates a bolt hole circle.' },
];

const CommandFinder = () => (
  <aside className="mt-[10px] mr-[5px] flex h-[153px] w-[180px] shrink-0 flex-col border border-[#d0d0d0] bg-white text-[6px] text-black shadow-md">
    <div className="flex h-[15px] items-center bg-linear-to-b from-[#f7f7f7] to-[#ececec] pl-1 text-[7px] text-[#888]">
      <span className="flex-1">Command Finder</span>
      <button aria-label="Close finder" className="flex size-[9px] items-center justify-center bg-[#d2d2d2] text-[#eee]">
        <Icon name="close" className="size-[5px]" />
      </button>
    </div>
    <div className="flex flex-1 flex-col pt-1">
      <h2 className="mx-1 border-b border-[#a9cdf0] pb-[1px] leading-[7px] font-bold">Matches for &nbsp;pattern</h2>
      <ul className="flex flex-1 flex-col gap-[2px] pt-[5px] pl-2">
        {matches.map((m) => (
          <li key={m.icon} className="flex leading-[7px]">
            <Icon name="helpBlue" className="size-2" />
            <a href="#match" className="ml-[2px] flex-1">
              <Icon name={m.icon} className="mr-[2px] inline-block size-2 align-top" />
              {m.text}
            </a>
          </li>
        ))}
      </ul>
      <div className="mx-1 border-t border-[#a9cdf0] pt-[5px] pr-[9px] pb-[2px] text-right leading-[9px]">
        <a href="#more">Show matches outside of Environment</a>
      </div>
    </div>
  </aside>
);

// ===============================
// BOTTOM BARS
// ===============================

const SheetTabs = () => (
  <div className="flex h-[9px] items-stretch border-t border-[#8c8c8c] bg-[#c3c3be] text-[6px] text-black">
    {['M3 2v8M9 2L5 6l4 4z', 'M9 2L4 6l5 4z', 'M3 2l5 4-5 4z', 'M3 2l4 4-4 4zM9 2v8'].map((d, i) => (
      <button key={i} aria-label={`Sheet navigation ${i + 1}`} className="w-2 border-r border-[#aaa] bg-[#e6e6e6]">
        <svg viewBox="0 0 12 12" className="size-[6px]"><path d={d} fill="#888" stroke="#888" /></svg>
      </button>
    ))}
    <button className="bg-white px-2 font-['Liberation_Sans',sans-serif] leading-[8px] font-bold [clip-path:polygon(0_0,100%_0,90%_100%,10%_100%)]">Sheet 1</button>
    <button aria-label="Background sheet" className="flex w-[19px] items-center justify-center bg-[#eccfb9] [clip-path:polygon(15%_0,100%_0,85%_100%,0_100%)]">
      <svg viewBox="0 0 9 7" className="h-[7px] w-[9px]">
        <path d="M2 1.500h6v5H2z" fill="#dcdcf8" stroke="#6a68c8" />
        <path d="M0 1h3v3" fill="none" stroke="#e8402a" />
      </svg>
    </button>
  </div>
);

const StatusBar = () => {
  const [zoom, setZoom] = useState(50);

  return (
    <footer className="flex h-[10px] shrink-0 items-center justify-end gap-[3px] bg-[#006487]">
      {['zoomArea', 'zoom', 'zoomBolt', 'fit', 'pan', 'zoomOut'].map((name) => (
        <button key={name} aria-label={name}><Icon name={name} className="size-2" /></button>
      ))}
      <input
        type="range"
        aria-label="Zoom"
        value={zoom}
        onChange={(e) => setZoom(e.target.value)}
        className="h-2 w-[54px] appearance-none bg-transparent [&::-webkit-slider-runnable-track]:h-px [&::-webkit-slider-runnable-track]:bg-[#a9cad6] [&::-webkit-slider-thumb]:-mt-[3px] [&::-webkit-slider-thumb]:h-[6px] [&::-webkit-slider-thumb]:w-[4px] [&::-webkit-slider-thumb]:appearance-none [&::-webkit-slider-thumb]:rounded-b-[2px] [&::-webkit-slider-thumb]:bg-white"
      />
      {['zoomIn', 'video', 'record', 'upload'].map((name) => (
        <button key={name} aria-label={name} className="px-[1px]"><Icon name={name} className="size-2" /></button>
      ))}
    </footer>
  );
};

// ===============================
// APP
// ===============================

const App = () => (
  <div className="flex h-screen flex-col overflow-hidden bg-white font-[Roboto,sans-serif]">
    <TopBar />
    <Ribbon />

    <div className="flex min-h-0 flex-1">
      <main className="flex min-w-0 flex-1 flex-col">
        <div className="flex h-[13px] items-center border-b border-[#bdbdbd] text-[7px] text-[#111]">
          <span className="flex h-[11px] w-[18px] items-center justify-center bg-[#127699]">
            <svg viewBox="0 0 10 4" className="h-1 w-[10px]"><path d="M0 0h10v4H0z" fill="#8cb7c4" /><path d="M2 0v4M4 0v4M6 0v4M8 0v4M0 2h10" stroke="#31687d" strokeWidth=".5" /></svg>
          </span>
          <p className="ml-[1px] truncate">
            Click elements, drag right for inside fence, drag left for inside/overlapping fence, or Alt+click to place first vertex of polygon fence, or Alt+click+drag for a lasso fence. Press Esc to clear the display of keypoints.
          </p>
        </div>

        <div className="flex h-[17px] items-end border-b border-[#6fa9be] pl-[1px]">
          <div className="flex h-[14px] w-[87px] items-center bg-[#006487] text-[6px] text-white">
            <svg viewBox="0 0 12 12" className="ml-2 size-2">
              <path d="M2 1h5l3 3v7H2z" fill="#ddd" />
              <path d="M4 6h4v4H4zM8 8h3v3H8z" fill="#b46a58" />
            </svg>
            <span className="ml-[2px] flex-1">w02_strainplate.dft</span>
            <button aria-label="Close tab"><Icon name="close" className="mr-[2px] size-[6px]" /></button>
          </div>
          <div className="mr-[2px] mb-[5px] ml-auto flex items-center gap-[3px] text-[#222]">
            <svg viewBox="0 0 12 6" className="h-[6px] w-3"><path d="M4 .5v5L1 3zM8 .5v5L11 3z" fill="none" stroke="#999" /></svg>
            <Caret />
            <button aria-label="Close window"><Icon name="close" className="size-[6px]" /></button>
          </div>
        </div>

        <div className="flex min-h-0 flex-1 items-start overflow-hidden">
          <SelectPanel />
          <div className="min-w-0 flex-1 pt-[9px] pr-[27px] pl-[95px]"><Sheet /></div>
          <CommandFinder />
        </div>

        <SheetTabs />
      </main>

      <nav className="flex w-[13px] shrink-0 flex-col items-center overflow-hidden bg-[#f4f4f4] pt-1 text-[7px] text-[#444]">
        <button aria-label="Library"><Icon name="library" /></button>
        <button className="mt-2 flex flex-col items-center gap-[1px]">
          <Icon name="groups" />
          <span className="leading-[9px] [writing-mode:vertical-rl]">Groups</span>
        </button>
        <button aria-label="Layers" className="mt-[5px]"><Icon name="layers" /></button>
      </nav>
    </div>

    <StatusBar />
  </div>
);

export default App;
